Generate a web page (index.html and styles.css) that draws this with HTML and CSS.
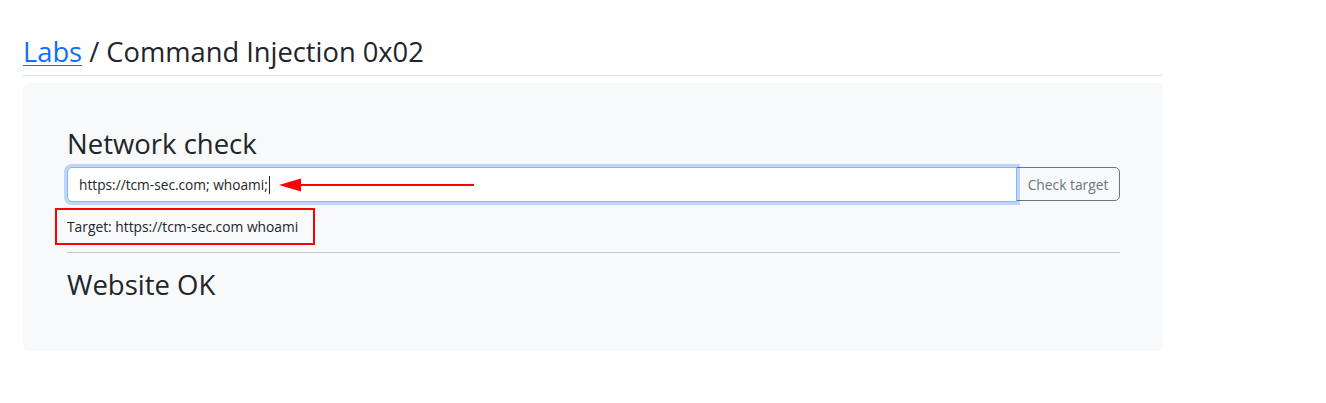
FILE: index.html
```html
<!DOCTYPE html>
<html lang="en">
<head>
<meta charset="utf-8">
<title>Command Injection 0x02</title>
<link rel="stylesheet" href="styles.css">
</head>
<body>
<div class="container">
  <header class="page-header">
    <h2 class="page-title"><a href="#" class="crumb-link">Labs</a> / Command Injection 0x02</h2>
  </header>
  <main class="card">
    <h3 class="section-title">Network check</h3>
    <form class="input-group">
      <div class="form-control">
        <span class="field-text">https://tcm-sec.com; whoami;</span><span class="caret"></span>
        <svg class="arrow" width="196" height="14" viewBox="0 0 196 14">
          <polygon points="0,7 22,0.5 22,13.5" fill="#f00"/>
          <rect x="20" y="6" width="175" height="2" fill="#f00"/>
        </svg>
      </div>
      <button type="button" class="btn-outline">Check target</button>
    </form>
    <div class="result-box">Target: https://tcm-sec.com whoami</div>
    <hr class="divider">
    <h3 class="section-title status">Website OK</h3>
  </main>
</div>
</body>
</html>
```
FILE: styles.css
```css
* { box-sizing: border-box; }

body {
  margin: 0;
  background: #fff;
  color: #212529;
  font-family: "Open Sans", "Noto Sans", sans-serif;
}

.container {
  width: 1140px;
  margin-left: 23px;
}

.page-header {
  padding: 34px 0 6px;
  border-bottom: 1px solid #dee2e6;
}

.page-title {
  margin: 0;
  font-size: 27.3px;
  line-height: 35px;
  font-weight: 400;
  color: #212529;
}

.crumb-link {
  color: #0d6efd;
  text-decoration: underline;
  text-underline-offset: 3px;
  text-decoration-thickness: 1px;
}

.card {
  margin-top: 7px;
  background: #f8f9fa;
  border-radius: 6px;
  padding: 45px 43px 50px 44px;
}

.section-title {
  margin: 0;
  font-size: 27.5px;
  line-height: 32px;
  font-weight: 400;
  color: #212529;
}

.input-group {
  display: flex;
  margin: 7px 0 0;
  height: 35px;
}

.form-control {
  flex: 1;
  display: flex;
  align-items: center;
  height: 35px;
  padding: 0 11px;
  background: #fff;
  border: 1px solid #86b7fe;
  border-radius: 5px 0 0 5px;
  box-shadow: 0 0 0 3px rgba(13, 110, 253, 0.25);
  font-size: 13.7px;
  color: #212529;
  position: relative;
  z-index: 1;
}

.field-text {
  white-space: pre;
}

.caret {
  display: inline-block;
  width: 1px;
  height: 18px;
  background: #212529;
  margin-left: 1px;
}

.arrow {
  display: block;
  margin-left: 9px;
  flex: none;
}

.btn-outline {
  width: 104px;
  height: 34px;
  padding: 0;
  background: transparent;
  border: 1px solid #6c757d;
  border-radius: 0 5px 5px 0;
  color: #6c757d;
  font-family: inherit;
  font-size: 13.8px;
  margin-left: -1px;
}

.result-box {
  display: inline-block;
  margin: 6px 0 0 -12px;
  padding: 6px 15px 6px 10px;
  border: 2px solid #f00;
  font-size: 13.8px;
  line-height: 21px;
  color: #212529;
}

.divider {
  margin: 7px 0 0;
  border: 0;
  border-top: 1px solid #c4c6c8;
  height: 0;
}

.status {
  margin-top: 16px;
}
```
